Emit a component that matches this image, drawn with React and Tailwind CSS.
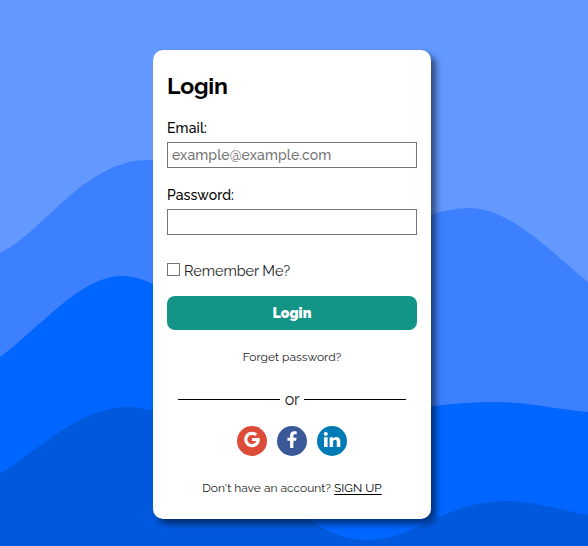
import React from "react";

function Waves() {
  return (
    <svg className="absolute inset-0 h-full w-full" viewBox="0 0 588 546" preserveAspectRatio="none" aria-hidden="true">
      <rect width="588" height="546" fill="#6398ff" />
      <path fill="#3d80ff" d="M0 253C42 234 84 160 148 160C205 160 245 244 305 253C360 261 410 209 468 208C510 208 545 247 588 282V546H0Z" />
      <path fill="#0066ff" d="M0 357C40 328 80 276 122 276C180 276 225 365 290 398C350 429 410 402 495 402C530 402 558 410 588 412V546H0Z" />
      <path fill="#0059dd" d="M0 474C40 448 82 407 127 407C195 407 270 485 315 523C350 547 385 543 420 526C450 512 472 501 506 501C535 501 565 511 588 515V546H0Z" />
    </svg>
  );
}

function Social({ label, className, d, viewBox }) {
  return (
    <a href="#" aria-label={label} className={"flex h-[30px] w-[30px] items-center justify-center rounded-full pb-[3px] text-white " + className}>
      <svg viewBox={viewBox} className="h-[17px] w-[18px]" fill="currentColor" aria-hidden="true">
        <path d={d} />
      </svg>
    </a>
  );
}

const GOOGLE = "M9 7.1H16.6C17.5 12.1 14.2 16.2 9 16.2C4.6 16.2 1.2 12.8 1.2 8.5C1.2 4.2 4.6 .8 9 .8C11.1 .8 12.9 1.5 14.3 2.8L12 5.1C11.2 4.3 10.2 3.9 9 3.9C6.4 3.9 4.4 6 4.4 8.5C4.4 11 6.4 13.1 9 13.1C11.2 13.1 12.8 11.9 13.3 10.1H9Z";
const FACEBOOK = "M13.7 .5V3.3H12C10.7 3.3 10.4 3.9 10.4 4.9V6.7H13.6L13.1 9.7H10.4V17H7.1V9.7H4.4V6.7H7.1V4.4C7.1 1.8 8.8 .3 11.3 .3C12.4 .3 13.4 .4 13.7 .5Z";
const LINKEDIN = "M1 6.2H4.6V16H1ZM2.8 1C4 1 4.8 1.8 4.8 2.9C4.8 4 4 4.8 2.8 4.8C1.6 4.8 .8 4 .8 2.9C.8 1.8 1.6 1 2.8 1ZM6.6 6.2H10V7.6C10.7 6.5 11.8 5.9 13.3 5.9C15.8 5.9 17.3 7.5 17.3 10.4V16H13.8V10.8C13.8 9.5 13.3 8.7 12.1 8.7C10.8 8.7 10.1 9.6 10.1 10.8V16H6.6Z";

export default function App() {
  return (
    <main className="relative isolate flex h-[546px] w-full justify-center overflow-hidden pt-[50px] pr-[4px] font-['Raleway','Lato',sans-serif] text-black">
      <Waves />
      <form className="relative flex h-[469px] w-[278px] flex-col rounded-[10px] bg-white px-[14px] pt-[21px] shadow-[5px_5px_6px_rgba(0,0,0,0.5)]">
        <h1 className="h-[30px] text-[23px] leading-[30px] font-bold tracking-[-0.2px]">Login</h1>
        <label htmlFor="email" className="mt-[17px] h-[20px] text-[14px] leading-[20px] font-medium tracking-[0.15px]">Email:</label>
        <input id="email" placeholder="example@example.com" className="mt-[4px] h-[26px] border border-[#767676] px-[4px] text-[14px] font-medium tracking-[0.13px] placeholder:text-[#757575]" />
        <label htmlFor="password" className="mt-[17px] h-[20px] text-[14px] leading-[20px] font-medium tracking-[0.1px]">Password:</label>
        <input id="password" type="password" className="mt-[4px] h-[26px] border border-[#767676] px-[4px]" />
        <label className="mt-[26px] flex h-[20px] items-center text-[14.5px] leading-[20px] tracking-[-0.05px] text-[#222]">
          <input type="checkbox" className="mr-[4px] mb-[3px] h-[13px] w-[13px] appearance-none border border-[#767676] bg-white" />
          Remember Me?
        </label>
        <button type="button" className="mt-[15px] h-[34px] rounded-[8px] bg-[#129487] text-[14px] font-black tracking-[0.1px] text-white">Login</button>
        <a href="#" className="mt-[17px] self-center text-[12px] leading-[20px] text-[#222]">Forget password?</a>
        <div className="mt-[21px] flex h-[22px] items-center justify-center gap-[5px] text-[16px] leading-[22px] text-[#222]">
          <span className="h-px w-[102px] bg-black" />
          <span className="relative top-px -mx-[0.5px] tracking-[-0.2px]">or</span>
          <span className="h-px w-[102px] bg-black" />
        </div>
        <div className="mt-[16px] flex justify-center gap-[10px]">
          <Social label="Google" className="bg-[#dd4b39]" d={GOOGLE} viewBox="0 0 18 17" />
          <Social label="Facebook" className="bg-[#3b5998]" d={FACEBOOK} viewBox="0 0 18 17" />
          <Social label="LinkedIn" className="bg-[#007bb5]" d={LINKEDIN} viewBox="0 0 18 17" />
        </div>
        <p className="mt-[22px] text-center text-[12px] leading-[20px] whitespace-nowrap text-[#222]">
          Don't have an account? <a href="#" className="text-black underline underline-offset-2">SIGN UP</a>
        </p>
      </form>
    </main>
  );
}
